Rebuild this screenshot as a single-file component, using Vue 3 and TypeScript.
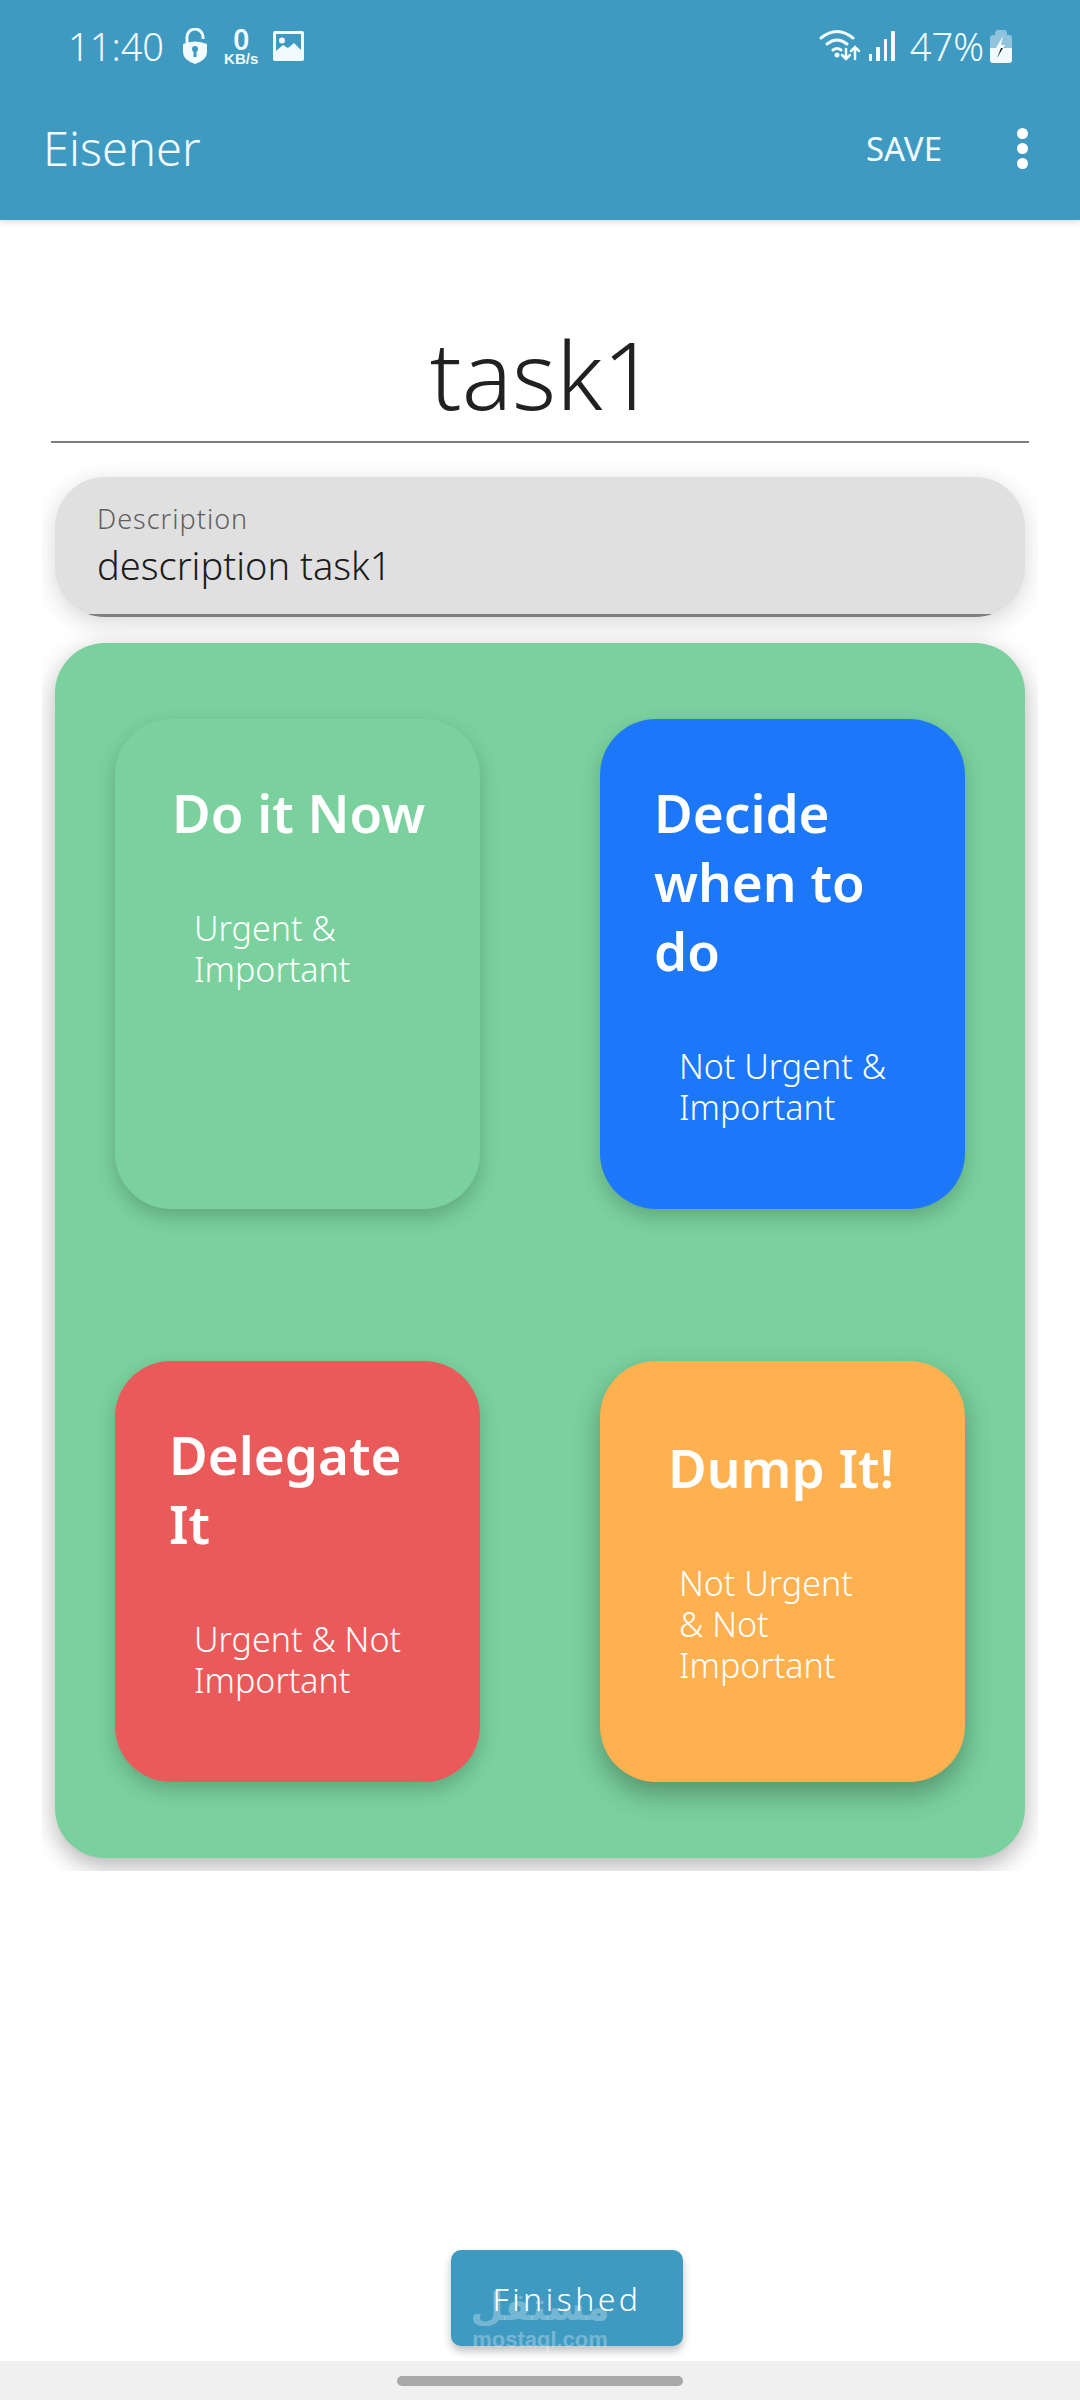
<script setup lang="ts">
interface Quadrant {
  title: string[]
  sub: string[]
  kind: string
}

const quadrants: Quadrant[] = [
  { title: ['Do it Now'], sub: ['Urgent &', 'Important'], kind: 'now' },
  { title: ['Decide', 'when to', 'do'], sub: ['Not Urgent &', 'Important'], kind: 'decide' },
  { title: ['Delegate', 'It'], sub: ['Urgent & Not', 'Important'], kind: 'delegate' },
  { title: ['Dump It!'], sub: ['Not Urgent', '& Not', 'Important'], kind: 'dump' },
]
</script>

<template>
  <div class="page">
    <header class="appbar">
      <div class="status">
        <div class="status-left">
          <span class="time">11:40</span>
          <svg class="lock" width="26" height="36" viewBox="0 0 26 36">
            <path d="M5 15V9a8 8 0 0 1 16 0v2" fill="none" stroke="#f2fbff" stroke-width="3" />
            <path d="M1 16q12-5 24 0v8q0 8-12 12Q1 32 1 24z" fill="#f2fbff" />
            <circle cx="13" cy="21" r="3" fill="#3f9ac2" />
            <rect x="11.5" y="22" width="3" height="7" fill="#3f9ac2" />
          </svg>
          <div class="speed">
            <span class="speed-num">0</span>
            <span class="speed-unit">KB/s</span>
          </div>
          <svg class="pic" width="31" height="30" viewBox="0 0 31 30">
            <rect width="31" height="30" rx="2" fill="#f2fbff" />
            <rect x="3" y="3" width="25" height="17" fill="#3f9ac2" />
            <circle cx="9" cy="9.5" r="3" fill="#f2fbff" />
            <path d="M3 20l7-6 5 3 6-5 7 7v2H3z" fill="#f2fbff" />
          </svg>
        </div>
        <div class="status-right">
          <svg width="42" height="34" viewBox="0 0 42 34">
            <g fill="none" stroke="#f2fbff" stroke-width="3" stroke-linecap="round">
              <path d="M2 9q16-13 32 0" />
              <path d="M8 15q10-8 20 0" />
              <path d="M14 21q4-3 8 0" />
              <path d="M27 20v10m-4-4 4 4 4-4" stroke-width="2.5" />
              <path d="M36 30V18m-4 4 4-4 4 4" stroke-width="2.5" />
            </g>
            <circle cx="18" cy="26" r="2.5" fill="#f2fbff" />
          </svg>
          <div class="bars">
            <i class="b1"></i><i class="b2"></i><i class="b3"></i><i class="b4"></i>
          </div>
          <span class="battery-text">47%</span>
          <svg width="22" height="33" viewBox="0 0 22 33">
            <path d="M5 3q0-3 3-3h6q3 0 3 3v2h2q3 0 3 3v10H0V8q0-3 3-3h2z" fill="#8fc4dc" />
            <path d="M0 18h22v12q0 3-3 3H3q-3 0-3-3z" fill="#f2fbff" />
            <path d="M13 6 6 18h5l-4 10 8-13h-4z" fill="#f2fbff" />
            <path d="M11 18l-4 10 6-10z" fill="#1c2226" />
          </svg>
        </div>
      </div>
      <div class="toolbar">
        <span class="app-title">Eisener</span>
        <div class="actions">
          <span class="save">SAVE</span>
          <div class="dots"><i></i><i></i><i></i></div>
        </div>
      </div>
    </header>

    <main class="content">
      <div class="title-field">task1</div>

      <div class="clip">
        <div class="desc">
          <span class="desc-label">Description</span>
          <span class="desc-value">description task1</span>
        </div>

        <section class="matrix">
          <article v-for="q in quadrants" :key="q.kind" class="card" :class="q.kind">
            <h2 class="card-title">
              <span v-for="line in q.title" :key="line">{{ line }}</span>
            </h2>
            <p class="card-sub">
              <span v-for="line in q.sub" :key="line">{{ line }}</span>
            </p>
          </article>
        </section>
      </div>
    </main>

    <div class="bottom">
      <button class="finish">
        <span class="mark" aria-hidden="true">
          <span class="mark-ar">مستقل</span>
          <span class="mark-en">mostaql.com</span>
        </span>
        <span class="finish-label">Finished</span>
      </button>
    </div>

    <div class="navbar"><div class="pill"></div></div>
  </div>
</template>

<style>
body {
  background: #fff;
}
</style>

<style scoped>
.page {
  width: 1080px;
  height: 2400px;
  display: flex;
  flex-direction: column;
  font-family: "Noto Sans", "DejaVu Sans", sans-serif;
  background: #fff;
  overflow: hidden;
}

.appbar {
  height: 220px;
  flex: none;
  background: #3f9ac2;
  box-shadow: 0 2px 6px rgba(0, 0, 0, 0.15);
  color: #f2fbff;
  position: relative;
  z-index: 1;
}
.status {
  height: 92px;
  display: flex;
  justify-content: space-between;
  align-items: center;
  padding: 0 68px;
}
.status-left,
.status-right {
  display: flex;
  align-items: center;
}
.time {
  font-size: 38px;
  font-weight: 300;
  margin-right: 18px;
}
.speed {
  display: flex;
  flex-direction: column;
  align-items: center;
  margin: 0 15px 0 16px;
  line-height: 1;
}
.speed-num {
  font-size: 28px;
  font-weight: 600;
  line-height: 24px;
}
.speed-unit {
  font-size: 15px;
  font-weight: 700;
  font-family: "Liberation Sans", sans-serif;
}
.bars {
  display: flex;
  align-items: flex-end;
  gap: 4px;
  height: 30px;
  margin: 0 15px 0 8px;
}
.bars i {
  width: 3.5px;
  background: #f2fbff;
}
.b1 { height: 7px; }
.b2 { height: 14px; }
.b3 { height: 22px; }
.b4 { height: 30px; }
.battery-text {
  font-size: 38px;
  font-weight: 300;
  margin-right: 6px;
}

.toolbar {
  height: 112px;
  display: flex;
  justify-content: space-between;
  align-items: center;
  padding: 0 52px 0 43px;
}
.app-title {
  font-size: 47px;
  font-weight: 300;
}
.actions {
  display: flex;
  align-items: center;
  gap: 75px;
}
.save {
  font-size: 33px;
  font-weight: 400;
}
.dots {
  display: flex;
  flex-direction: column;
  gap: 4px;
}
.dots i {
  width: 11px;
  height: 11px;
  border-radius: 50%;
  background: #fff;
}

.content {
  flex: none;
  padding-top: 100px;
}
.title-field {
  margin: 0 51px;
  padding-left: 6px;
  height: 121px;
  border-bottom: 2px solid #7d7d7d;
  text-align: center;
  font-size: 94px;
  font-weight: 300;
  line-height: 109px;
  color: #212121;
}

.clip {
  margin: 10px 42px 0;
  padding: 24px 13px 13px;
  display: flex;
  flex-direction: column;
  gap: 26px;
  overflow: hidden;
}
.desc {
  position: relative;
  height: 140px;
  padding: 24px 42px 0;
  box-sizing: border-box;
  background: #e0e0e0;
  border-radius: 50px;
  box-shadow: 0 6px 24px rgba(0, 0, 0, 0.16);
  display: flex;
  flex-direction: column;
  overflow: hidden;
}
.desc::after {
  content: "";
  position: absolute;
  left: 0;
  right: 0;
  bottom: 0;
  height: 3px;
  background: #7d7d7d;
}
.desc-label {
  font-size: 27px;
  font-weight: 300;
  letter-spacing: 1px;
  color: #5f5f5f;
  line-height: 36px;
}
.desc-value {
  font-size: 38px;
  font-weight: 300;
  color: #1c1c1c;
  line-height: 56px;
}

.matrix {
  height: 1215px;
  box-sizing: border-box;
  padding: 76px 60px 0;
  background: #7ad19d;
  border-radius: 50px;
  box-shadow: 0 8px 24px rgba(0, 0, 0, 0.3);
  display: grid;
  grid-template-columns: 365px 365px;
  grid-template-rows: 490px 421px;
  justify-content: space-between;
  row-gap: 152px;
}

.card {
  border-radius: 56px;
  color: #fff;
  box-shadow: 0 8px 20px rgba(0, 0, 0, 0.2);
  display: flex;
  flex-direction: column;
}
.now { background: #7ad19d; }
.decide { background: #1c78f8; }
.delegate { background: #eb5a5a; }
.dump { background: #ffb04f; box-shadow: 0 12px 28px rgba(0, 0, 0, 0.3); }

.card-title {
  margin: 0;
  padding: 59px 0 0 54px;
  font-size: 53px;
  font-weight: 600;
  line-height: 69px;
  display: flex;
  flex-direction: column;
}
.now .card-title { padding-left: 57px; }
.dump .card-title { padding: 72px 0 0 68px; }
.card-sub {
  margin: 0;
  padding: 61px 0 0 79px;
  font-size: 34px;
  font-weight: 300;
  line-height: 41px;
  display: flex;
  flex-direction: column;
}

.bottom {
  flex: 1;
  display: flex;
  align-items: flex-end;
  padding: 0 0 15px 451px;
}
.finish {
  position: relative;
  width: 232px;
  height: 96px;
  padding: 0;
  background: #3f9ac2;
  border: 0;
  border-radius: 10px;
  box-shadow: 0 5px 8px rgba(0, 0, 0, 0.25);
  color: #fff;
  font-family: inherit;
  font-size: 32px;
  font-weight: 300;
  letter-spacing: 3.5px;
}
.finish-label {
  position: relative;
}
.mark {
  position: absolute;
  left: 24px;
  top: 34px;
  width: 130px;
  color: rgba(255, 255, 255, 0.3);
  display: flex;
  flex-direction: column;
  align-items: center;
  letter-spacing: 0;
}
.mark-ar {
  font-family: "DejaVu Sans", sans-serif;
  font-size: 38px;
  font-weight: 700;
  line-height: 46px;
}
.mark-en {
  font-family: "Liberation Sans", sans-serif;
  font-size: 22px;
  font-weight: 700;
  line-height: 20px;
}

.navbar {
  height: 39px;
  flex: none;
  background: #f0f0f0;
  display: flex;
  justify-content: center;
  align-items: center;
}
.pill {
  width: 286px;
  height: 10px;
  border-radius: 5px;
  background: #a8a8a8;
}
</style>
